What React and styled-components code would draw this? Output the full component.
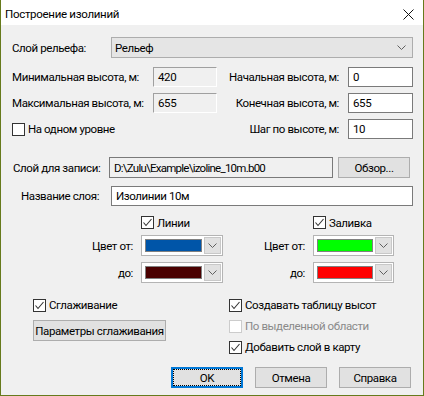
import React from "react";
import styled, { createGlobalStyle } from "styled-components";

const GlobalStyle = createGlobalStyle`
  html, body {
    margin: 0;
    padding: 0;
    background: #f0f0f0;
  }
  * {
    box-sizing: border-box;
  }
  body {
    font-family: Roboto, "Liberation Sans", Arial, sans-serif;
    font-size: 11.5px;
    letter-spacing: -0.4px;
    color: #000;
  }
`;

// icons
const Chevron = () => (
  <svg width="9" height="5" viewBox="0 0 9 5">
    <polyline points="0.5,0.5 4.5,4.5 8.5,0.5" fill="none" stroke="#606060" strokeWidth="1" />
  </svg>
);

const Check = () => (
  <svg width="11" height="11" viewBox="0 0 11 11">
    <polyline points="1.5,5.5 4,8.5 9.5,2" fill="none" stroke="#333" strokeWidth="1.1" />
  </svg>
);

function CheckBox({ checked, disabled, label }) {
  return (
    <CheckRow $disabled={disabled}>
      <Box $disabled={disabled}>{checked && <Check />}</Box>
      <span>{label}</span>
    </CheckRow>
  );
}

function ColorPicker({ color }) {
  return (
    <ColorBox>
      <SwatchWrap>
        <Swatch $color={color} />
      </SwatchWrap>
      <DropBtn>
        <Chevron />
      </DropBtn>
    </ColorBox>
  );
}

function App() {
  return (
    <>
      <GlobalStyle />
      <Window>
        <TitleBar>
          <Title>Построение изолиний</Title>
          <CloseBtn>
            <svg width="11" height="11" viewBox="0 0 11 11">
              <path d="M0.5 0.5 L10.5 10.5 M10.5 0.5 L0.5 10.5" stroke="#111" strokeWidth="1" />
            </svg>
          </CloseBtn>
        </TitleBar>

        <Body>
          {/* relief layer */}
          <ComboRow>
            <Label $width={99}>Слой рельефа:</Label>
            <Combo>
              <span>Рельеф</span>
              <Chevron />
            </Combo>
          </ComboRow>

          {/* heights */}
          <HeightsGrid>
            <Label>Минимальная высота, м:</Label>
            <Static>420</Static>
            <RightLabel>Начальная высота, м:</RightLabel>
            <Input>0</Input>

            <Label>Максимальная высота, м:</Label>
            <Static>655</Static>
            <RightLabel>Конечная высота, м:</RightLabel>
            <Input>655</Input>

            <SpanTwo>
              <CheckBox label="На одном уровне" />
            </SpanTwo>
            <RightLabel>Шаг по высоте, м:</RightLabel>
            <Input>10</Input>
          </HeightsGrid>

          {/* output layer */}
          <PathRow>
            <Label $width={97} $indent={1}>Слой для записи:</Label>
            <PathBox>D:\Zulu\Example\izoline_10m.b00</PathBox>
            <Button $width={72}>Обзор...</Button>
          </PathRow>
          <NameRow>
            <Label $width={99} $indent={9}>Название слоя:</Label>
            <Input $grow>Изолинии 10м</Input>
          </NameRow>

          {/* colors */}
          <ColorsGrid>
            <span />
            <CheckBox checked label="Линии" />
            <span />
            <CheckBox checked label="Заливка" />

            <ColorLabel>Цвет от:</ColorLabel>
            <ColorPicker color="#0055a8" />
            <ColorLabel>Цвет от:</ColorLabel>
            <ColorPicker color="#00ff00" />

            <ColorLabel>до:</ColorLabel>
            <ColorPicker color="#4a0000" />
            <ColorLabel>до:</ColorLabel>
            <ColorPicker color="#ff0000" />
          </ColorsGrid>

          {/* options */}
          <Options>
            <OptionsLeft>
              <CheckBox checked label="Сглаживание" />
              <Button $width={133}>Параметры сглаживания</Button>
            </OptionsLeft>
            <OptionsRight>
              <CheckBox checked label="Создавать таблицу высот" />
              <CheckBox disabled label="По выделенной области" />
              <CheckBox checked label="Добавить слой в карту" />
            </OptionsRight>
          </Options>

          <Footer>
            <Button $width={72} $default>
              <FocusRect>OK</FocusRect>
            </Button>
            <Button $width={72}>Отмена</Button>
            <Button $width={72}>Справка</Button>
          </Footer>
        </Body>
      </Window>
    </>
  );
}

const Window = styled.div`
  width: 424px;
  height: 396px;
  display: flex;
  flex-direction: column;
  background: #f0f0f0;
  border: 1px solid #667a1c;
  border-top: none;
  overflow: hidden;
`;

const TitleBar = styled.div`
  height: 25px;
  flex-shrink: 0;
  background: #fff;
  display: flex;
  align-items: center;
  justify-content: space-between;
  padding: 0 9px 0 4px;
`;

const Title = styled.div`
  font-size: 11.5px;
  letter-spacing: -0.3px;
  padding-top: 2px;
`;

const CloseBtn = styled.div`
  display: flex;
  padding-top: 4px;
`;

const Body = styled.div`
  display: flex;
  flex-direction: column;
  padding: 12px 10px 0 11px;
`;

const Label = styled.div`
  width: ${(p) => (p.$width ? `${p.$width}px` : "auto")};
  padding-left: ${(p) => p.$indent || 0}px;
  flex-shrink: 0;
  white-space: nowrap;
`;

const RightLabel = styled.div`
  text-align: right;
  padding-right: 9px;
  white-space: nowrap;
`;

const ComboRow = styled.div`
  display: flex;
  align-items: center;
`;

const Combo = styled.div`
  width: 302px;
  height: 21px;
  display: flex;
  align-items: center;
  justify-content: space-between;
  padding: 0 6px 0 3px;
  background: #e5e5e5;
  border: 1px solid #adadad;
`;

const HeightsGrid = styled.div`
  margin-top: 9px;
  display: grid;
  grid-template-columns: 141px 64px 1fr 65px;
  grid-template-rows: repeat(3, 20px);
  row-gap: 6px;
  align-items: center;
`;

const Static = styled.div`
  height: 20px;
  display: flex;
  align-items: center;
  padding-left: 4px;
  border: 1px solid;
  border-color: #a0a0a0 #fff #fff #a0a0a0;
`;

const Input = styled.div`
  height: 20px;
  display: flex;
  align-items: center;
  padding-left: 4px;
  background: #fff;
  border: 1px solid #7a7a7a;
  ${(p) => p.$grow && "flex: 1;"}
`;

const SpanTwo = styled.div`
  grid-column: span 2;
`;

const CheckRow = styled.div`
  display: flex;
  align-items: center;
  gap: 3px;
  white-space: nowrap;
  color: ${(p) => (p.$disabled ? "#8a8a8a" : "#000")};
`;

const Box = styled.span`
  width: 13px;
  height: 13px;
  flex-shrink: 0;
  display: flex;
  align-items: center;
  justify-content: center;
  background: #fff;
  border: 1px solid ${(p) => (p.$disabled ? "#cccccc" : "#333")};
`;

const PathRow = styled.div`
  margin-top: 18px;
  display: flex;
  align-items: center;
`;

const PathBox = styled.div`
  width: 224px;
  height: 21px;
  display: flex;
  align-items: center;
  padding-left: 4px;
  letter-spacing: -0.75px;
  border: 1px solid #7a7a7a;
  margin-right: 5px;
`;

const Button = styled.div`
  width: ${(p) => p.$width}px;
  height: 21px;
  display: flex;
  align-items: center;
  justify-content: center;
  background: #e1e1e1;
  border: ${(p) => (p.$default ? "2px solid #0078d7" : "1px solid #adadad")};
  white-space: nowrap;
`;

const FocusRect = styled.div`
  width: 100%;
  height: 100%;
  display: flex;
  align-items: center;
  justify-content: center;
  border: 1px dotted #000;
`;

const NameRow = styled.div`
  margin-top: 8px;
  display: flex;
  align-items: center;
`;

const ColorsGrid = styled.div`
  margin-top: 10px;
  display: grid;
  grid-template-columns: 121px 82px 74px 81px;
  grid-template-rows: 13px 21px 21px;
  column-gap: 8px;
  row-gap: 6px;
  align-items: center;
`;

const ColorLabel = styled.div`
  text-align: right;
  white-space: nowrap;
`;

const ColorBox = styled.div`
  height: 21px;
  display: flex;
  padding: 1px;
  background: #fff;
  border: 1px solid #b4b4b4;
`;

const SwatchWrap = styled.div`
  flex: 1;
  padding: 2px 2px 2px 2px;
  display: flex;
`;

const Swatch = styled.div`
  flex: 1;
  background: ${(p) => p.$color};
  border: 1px solid #808080;
`;

const DropBtn = styled.div`
  width: 17px;
  display: flex;
  align-items: center;
  justify-content: center;
  background: #e1e1e1;
  border: 1px solid #c8c8c8;
`;

const Options = styled.div`
  margin-top: 15px;
  display: flex;
`;

const OptionsLeft = styled.div`
  width: 195px;
  padding-left: 21px;
  display: flex;
  flex-direction: column;
  align-items: flex-start;
  gap: 8px;
`;

const OptionsRight = styled.div`
  padding-left: 22px;
  display: flex;
  flex-direction: column;
  gap: 7px;
`;

const Footer = styled.div`
  margin-top: 13px;
  display: flex;
  justify-content: flex-end;
  gap: 12px;
  padding-right: 2px;
`;

export default App;
